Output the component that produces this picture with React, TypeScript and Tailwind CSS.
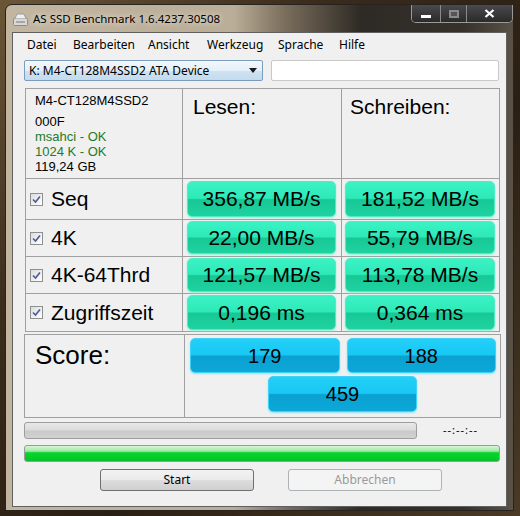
import React from "react";

const sans = { fontFamily: '"Liberation Sans", Arial, sans-serif' };
const ui = { fontFamily: '"Noto Sans", "Open Sans", sans-serif' };

function Check() {
  return (
    <span className="flex h-[13px] w-[13px] items-center justify-center border border-[#8e8f8f] bg-gradient-to-br from-[#dcdcdc] to-[#ffffff]">
      <svg width="9" height="9" viewBox="0 0 9 9">
        <path d="M1 4.5 L3.5 7 L8 1.5" fill="none" stroke="#4a5a97" strokeWidth="1.6" />
      </svg>
    </span>
  );
}

function Value({ text, tone = "green" }: { text: string; tone?: "green" | "blue" }) {
  const cls =
    tone === "green"
      ? "border-[#52ecc4] bg-[linear-gradient(to_bottom,#3cf2c4_0%,#2de9b8_48%,#17c895_52%,#1ed3a0_100%)] shadow-[0_1px_2px_#8ff2d6]"
      : "border-[#3fd3f7] bg-[linear-gradient(to_bottom,#22d0f8_0%,#18c7f3_48%,#0aa1d1_52%,#0ca8d8_100%)] shadow-[0_1px_2px_#8fe2fb]";
  return (
    <div className={`flex h-full w-full items-center justify-center rounded-[5px] border text-black ${cls}`}>
      <span className={tone === "green" ? "text-[21px]" : "text-[20px]"}>{text}</span>
    </div>
  );
}

const rows = [
  { label: "Seq", read: "356,87 MB/s", write: "181,52 MB/s", h: "h-[41px]", pad: "pt-[2px] pb-[2px]" },
  { label: "4K", read: "22,00 MB/s", write: "55,79 MB/s", h: "h-[37px]", pad: "pt-[1px] pb-[2px]" },
  { label: "4K-64Thrd", read: "121,57 MB/s", write: "113,78 MB/s", h: "h-[37px]", pad: "pt-[1px] pb-[1px]" },
  { label: "Zugriffszeit", read: "0,196 ms", write: "0,364 ms", h: "h-[38px]", pad: "pt-[1px] pb-[1px]" },
];

export default function App() {
  return (
    <div className="h-[516px] w-[520px] overflow-hidden bg-[linear-gradient(135deg,#6b5638_0%,#3b2c1c_30%,#2a1f14_60%,#4a3a26_100%)] pl-[5px] pr-[6px] pt-[4px] pb-[5px]">
      <div className="flex h-[507px] w-[509px] flex-col rounded-t-[7px] border border-[#262320] bg-[linear-gradient(to_right,#c2b6a0_0%,#b9ad97_45%,#7a6e5c_55%,#2e2a25_70%,#35302a_90%,#5a5246_100%)] px-[6px] pb-[3px]">
        {/* title bar */}
        <div className="relative flex h-[27px] items-center">
          <svg width="15" height="13" viewBox="0 0 15 13" className="ml-[1px] mt-[1px]">
            <rect x="0.5" y="5.5" width="14" height="7" rx="1" fill="#d8d8d8" stroke="#8a8a8a" />
            <path d="M2 5.5 L4 1 H11 L13 5.5" fill="#eeeeee" stroke="#9a9a9a" />
            <rect x="3" y="8" width="9" height="2" fill="#a8a8a8" />
          </svg>
          <span className="ml-[5px] text-[11.5px] text-black [text-shadow:0_0_6px_#ffffff]" style={ui}>
            AS SSD Benchmark 1.6.4237.30508
          </span>
          <div className="absolute right-[-6px] top-0 flex h-[18px] overflow-hidden rounded-b-[5px] border border-t-0 border-[#9a9a9a]">
            <div className="flex w-[29px] items-center justify-center border-r border-[#8a8a8a] bg-[linear-gradient(to_bottom,#4a4a4a,#2a2a2a)]">
              <span className="mt-[5px] h-[3px] w-[10px] bg-white" />
            </div>
            <div className="flex w-[26px] items-center justify-center border-r border-[#8a8a8a] bg-[linear-gradient(to_bottom,#4a4a4a,#2a2a2a)]">
              <span className="h-[8px] w-[10px] border-[2px] border-[#8a8a8a] bg-[#555555]" />
            </div>
            <div className="flex w-[45px] items-center justify-center bg-[linear-gradient(to_bottom,#4a4a4a,#2a2a2a)]">
              <svg width="11" height="9" viewBox="0 0 11 9">
                <path d="M1.5 1 L9.5 8 M9.5 1 L1.5 8" stroke="#ffffff" strokeWidth="2.2" />
              </svg>
            </div>
          </div>
        </div>

        {/* client area */}
        <div className="flex h-[475px] flex-col border border-[#606060] bg-[#f0f0f0]">
          <div className="flex h-[23px] items-center pl-[14px] text-[12px] text-black" style={ui}>
            <span className="w-[46px]">Datei</span>
            <span className="w-[75px]">Bearbeiten</span>
            <span className="w-[59px]">Ansicht</span>
            <span className="w-[71px]">Werkzeug</span>
            <span className="w-[61px]">Sprache</span>
            <span>Hilfe</span>
          </div>

          <div className="ml-[11px] mt-[4px] flex h-[21px]">
            <div className="flex w-[239px] items-center justify-between rounded-[2px] border border-[#7c9cbc] bg-[linear-gradient(to_bottom,#f2f8fc_0%,#e4eff8_50%,#cfe3f2_51%,#c2dbee_100%)] px-[4px] text-[12px] text-black" style={ui}>
              <span>K: M4-CT128M4SSD2 ATA Device</span>
              <svg width="8" height="5" viewBox="0 0 8 5" className="mr-[1px]">
                <path d="M0 0 H8 L4 5 Z" fill="#1a1a1a" />
              </svg>
            </div>
            <div className="ml-[8px] w-[228px] rounded-[2px] border border-[#c8c8c8] bg-white" />
          </div>

          {/* results table */}
          <div className="ml-[12px] mt-[7px] w-[475px] border-l border-t border-[#a0a0a0]" style={sans}>
            <div className="flex h-[90px]">
              <div className="w-[157px] border-b border-r border-[#a0a0a0] pl-[9px] pt-[4px] text-[13px] leading-[15px] text-black">
                <div>M4-CT128M4SSD2</div>
                <div className="mt-[6px]">000F</div>
                <div className="text-[#267a26]">msahci - OK</div>
                <div className="text-[#267a26]">1024 K - OK</div>
                <div>119,24 GB</div>
              </div>
              <div className="w-[159px] border-b border-r border-[#a0a0a0] pl-[10px] pt-[2px] text-[21px] text-black">Lesen:</div>
              <div className="w-[158px] border-b border-r border-[#a0a0a0] pl-[8px] pt-[2px] text-[21px] text-black">Schreiben:</div>
            </div>
            {rows.map((r) => (
              <div key={r.label} className={`flex ${r.h}`}>
                <div className="flex w-[157px] items-center border-b border-r border-[#a0a0a0] pl-[4px]">
                  <Check />
                  <span className="ml-[8px] text-[21px] text-black">{r.label}</span>
                </div>
                <div className={`w-[159px] border-b border-r border-[#a0a0a0] pl-[4px] pr-[5px] ${r.pad}`}>
                  <Value text={r.read} />
                </div>
                <div className={`w-[158px] border-b border-r border-[#a0a0a0] pl-[3px] pr-[4px] ${r.pad}`}>
                  <Value text={r.write} />
                </div>
              </div>
            ))}
          </div>

          {/* score box */}
          <div className="ml-[11px] mt-[2px] flex h-[84px] w-[477px] border border-[#a0a0a0]" style={sans}>
            <div className="w-[160px] border-r border-[#a0a0a0] pl-[10px] pt-[1px] text-[26px] text-black">Score:</div>
            <div className="flex flex-1 flex-col items-center pt-[3px]">
              <div className="flex h-[35px] w-full gap-[7px] pl-[5px] pr-[4px]">
                <Value text="179" tone="blue" />
                <Value text="188" tone="blue" />
              </div>
              <div className="mt-[3px] h-[36px] w-[149px]">
                <Value text="459" tone="blue" />
              </div>
            </div>
          </div>

          {/* progress */}
          <div className="ml-[11px] mt-[4px] flex h-[17px] items-center">
            <div className="h-[17px] w-[393px] rounded-[3px] border border-[#9e9e9e] bg-[linear-gradient(to_bottom,#e8e8e8_0%,#dcdcdc_45%,#cacaca_55%,#d2d2d2_100%)]" />
            <span className="ml-[26px] text-[11px] tracking-[1px] text-black" style={ui}>--:--:--</span>
          </div>
          <div className="ml-[11px] mt-[6px] h-[17px] w-[476px] rounded-[3px] border border-[#9a9a9a] bg-[linear-gradient(to_bottom,#d4f7d4_0%,#9ee8a6_35%,#08d42e_45%,#04cc28_80%,#12b834_100%)]" />

          <div className="mt-[7px] flex h-[22px]" style={ui}>
            <div className="ml-[87px] flex w-[154px] items-center justify-center rounded-[3px] border border-[#707070] bg-[linear-gradient(to_bottom,#f2f2f2_0%,#ebebeb_48%,#dddddd_52%,#cfcfcf_100%)] text-[12px] text-black">
              Start
            </div>
            <div className="ml-[34px] flex w-[154px] items-center justify-center rounded-[3px] border border-[#adb2b5] bg-[#f4f4f4] text-[12px] text-[#9a9a9a]">
              Abbrechen
            </div>
          </div>
        </div>
      </div>
    </div>
  );
}
